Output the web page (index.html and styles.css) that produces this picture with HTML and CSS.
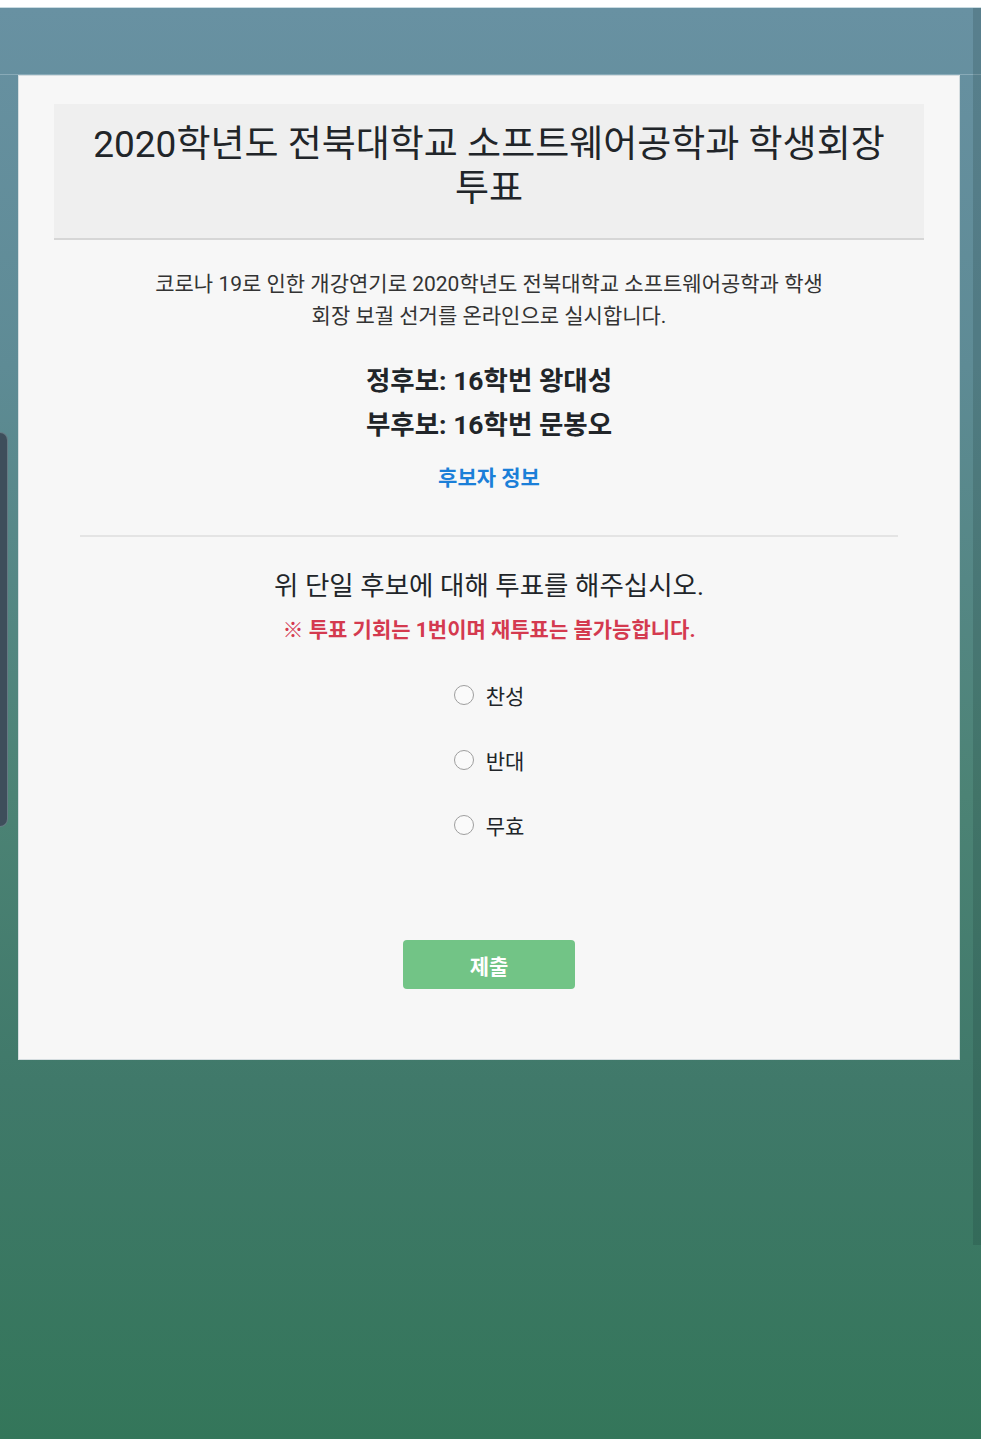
FILE: index.html
```html
<!DOCTYPE html>
<html lang="ko">
<head>
<meta charset="utf-8">
<title>학생회장 투표</title>
<link rel="stylesheet" href="styles.css">
</head>
<body>
<div class="statusbar"></div>
<div class="screen">
  <div class="band"></div>
  <main class="card">
    <header class="card-header">
      <h1 class="title">2020학년도 전북대학교 소프트웨어공학과 학생회장 투표</h1>
    </header>
    <p class="desc">코로나 19로 인한 개강연기로 2020학년도 전북대학교 소프트웨어공학과 학생 회장 보궐 선거를 온라인으로 실시합니다.</p>
    <div class="cands">
      <div class="cand">정후보: 16학번 왕대성</div>
      <div class="cand">부후보: 16학번 문봉오</div>
    </div>
    <a class="info-link" href="#">후보자 정보</a>
    <hr class="divider">
    <p class="question">위 단일 후보에 대해 투표를 해주십시오.</p>
    <p class="warning">※ 투표 기회는 1번이며 재투표는 불가능합니다.</p>
    <div class="options">
      <label class="option"><span class="radio"></span><span class="opt-label">찬성</span></label>
      <label class="option"><span class="radio"></span><span class="opt-label">반대</span></label>
      <label class="option"><span class="radio"></span><span class="opt-label">무효</span></label>
    </div>
    <button class="submit" type="button">제출</button>
  </main>
  <div class="edge-handle"></div>
  <div class="scroll-strip"></div>
</div>
</body>
</html>
```
FILE: styles.css
```css
html, body {
  margin: 0;
  padding: 0;
}
body {
  width: 981px;
  height: 1439px;
  overflow: hidden;
  font-family: Roboto, "Noto Sans CJK KR", sans-serif;
  background: #ffffff;
}
.statusbar {
  height: 7px;
  background: #ffffff;
  border-bottom: 1px solid #c9dbe2;
}
.screen {
  position: relative;
  height: 1431px;
  background: linear-gradient(to bottom, #6891a2 0%, #5e8b95 25%, #4c8375 55%, #40796a 75%, #34765a 100%);
}
.band {
  height: 67px;
  border-bottom: 1px solid rgba(200, 220, 230, 0.35);
  box-sizing: border-box;
}
.card {
  margin-left: 18px;
  width: 942px;
  box-sizing: border-box;
  background: #f7f7f7;
  border: 1px solid #d5dde0;
  padding: 28px 35px 70px 35px;
  display: flex;
  flex-direction: column;
  align-items: center;
  color: #212529;
}
.card-header {
  align-self: stretch;
  background: #efefef;
  border-bottom: 2px solid #d6d6d6;
  padding: 19px 20px 27px;
  text-align: center;
}
.title {
  margin: 0;
  font-size: 37px;
  line-height: 44px;
  font-weight: 400;
  color: #212529;
}
.desc {
  margin: 28px 0 0;
  padding: 0 90px;
  font-size: 21px;
  line-height: 32px;
  text-align: center;
  color: #333;
}
.cands {
  margin-top: 27px;
  display: flex;
  flex-direction: column;
  align-items: center;
}
.cand {
  font-size: 26.5px;
  line-height: 44px;
  font-weight: 700;
  color: #212529;
}
.info-link {
  margin-top: 17px;
  font-size: 21px;
  line-height: 28px;
  font-weight: 700;
  color: #1b7fd8;
  text-decoration: none;
}
.divider {
  align-self: stretch;
  margin: 43px 26px 0;
  border: 0;
  border-top: 2px solid #e4e4e4;
}
.question {
  margin: 31px 0 0;
  font-size: 26.5px;
  line-height: 36px;
  color: #212529;
}
.warning {
  margin: 12px 0 0;
  font-size: 21px;
  line-height: 28px;
  font-weight: 700;
  color: #d43a4f;
}
.options {
  margin-top: 31px;
  display: flex;
  flex-direction: column;
  gap: 25px;
}
.option {
  display: flex;
  align-items: center;
  gap: 12px;
  height: 40px;
}
.radio {
  width: 18px;
  height: 18px;
  border: 1.5px solid #9e9e9e;
  border-radius: 50%;
  background: #fafafa;
}
.opt-label {
  font-size: 21px;
  color: #212529;
}
.submit {
  margin-top: 95px;
  width: 172px;
  height: 49px;
  border: 0;
  border-radius: 4px;
  background: #72c486;
  color: #ffffff;
  font-family: Roboto, "Noto Sans CJK KR", sans-serif;
  font-size: 21px;
  font-weight: 700;
}
.edge-handle {
  position: absolute;
  left: 0;
  top: 424px;
  width: 7px;
  height: 393px;
  background: #3e4e5b;
  border: 1px solid rgba(150, 175, 180, 0.45);
  border-left: 0;
  border-radius: 0 8px 8px 0;
}
.scroll-strip {
  position: absolute;
  right: 0;
  top: 0;
  width: 8px;
  height: 1237px;
  background: rgba(20, 50, 50, 0.18);
}
```
